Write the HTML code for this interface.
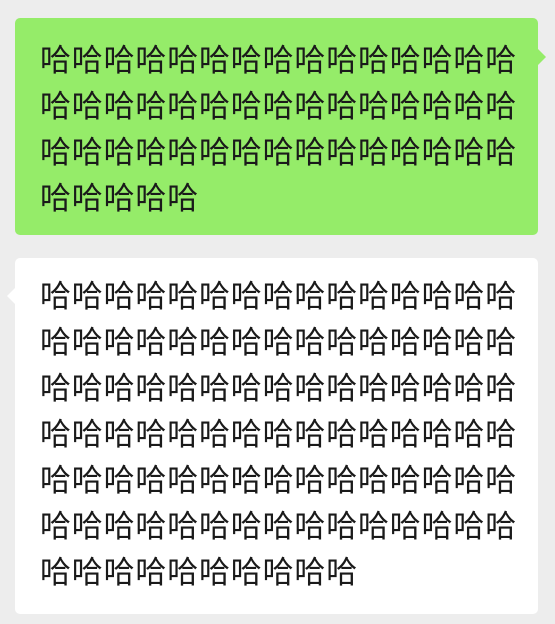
<!DOCTYPE html>
<html><head><meta charset="utf-8"><style>
html,body{margin:0;padding:0;background:#ededed;width:555px;height:624px;overflow:hidden}
.b{position:absolute;left:15px;width:523px;border-radius:5px;box-sizing:border-box;padding-left:25px;font-family:"Liberation Sans","Noto Sans CJK SC",sans-serif;font-size:31px;letter-spacing:0.8px;line-height:46px;color:#1a1a1a;word-break:break-all}
.g{top:18px;height:217px;background:#95ec69}
.w{top:258px;height:356px;background:#fff}
.t{width:490px;}
.g:after{content:"";position:absolute;right:-8px;top:31px;border:8px solid transparent;border-right:0;border-left:8px solid #95ec69}
.w:after{content:"";position:absolute;left:-8px;top:30px;border:8px solid transparent;border-left:0;border-right:8px solid #fff}
</style></head><body>
<div class="b g" style="padding-top:20px"><div class="t">哈哈哈哈哈哈哈哈哈哈哈哈哈哈哈哈哈哈哈哈哈哈哈哈哈哈哈哈哈哈哈哈哈哈哈哈哈哈哈哈哈哈哈哈哈哈哈哈哈哈</div></div>
<div class="b w" style="padding-top:16px"><div class="t">哈哈哈哈哈哈哈哈哈哈哈哈哈哈哈哈哈哈哈哈哈哈哈哈哈哈哈哈哈哈哈哈哈哈哈哈哈哈哈哈哈哈哈哈哈哈哈哈哈哈哈哈哈哈哈哈哈哈哈哈哈哈哈哈哈哈哈哈哈哈哈哈哈哈哈哈哈哈哈哈哈哈哈哈哈哈哈哈哈哈哈哈哈哈哈哈哈哈哈哈</div></div>
</body></html>
